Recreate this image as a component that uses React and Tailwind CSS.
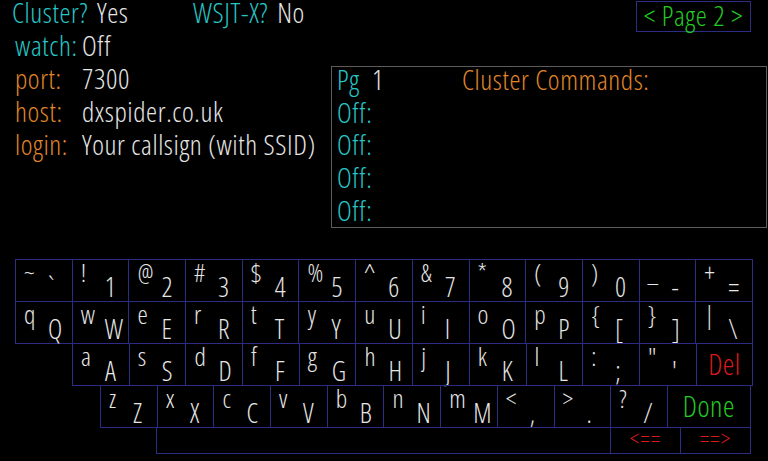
import React from 'react';

const row1 = [['~', '`'], ['!', '1'], ['@', '2'], ['#', '3'], ['$', '4'], ['%', '5'], ['^', '6'], ['&', '7'], ['*', '8'], ['(', '9'], [')', '0'], ['_', '-'], ['+', '=']];
const row2 = [['q', 'Q'], ['w', 'W'], ['e', 'E'], ['r', 'R'], ['t', 'T'], ['y', 'Y'], ['u', 'U'], ['i', 'I'], ['o', 'O'], ['p', 'P'], ['{', '['], ['}', ']'], ['|', '\\']];
const row3 = [['a', 'A'], ['s', 'S'], ['d', 'D'], ['f', 'F'], ['g', 'G'], ['h', 'H'], ['j', 'J'], ['k', 'K'], ['l', 'L'], [':', ';'], ['"', "'"]];
const row4 = [['z', 'Z'], ['x', 'X'], ['c', 'C'], ['v', 'V'], ['b', 'B'], ['n', 'N'], ['m', 'M'], ['<', ','], ['>', '.'], ['?', '/']];

const Key = ({ top, bottom }) => (
  <div className="-ml-px w-[57.7px] h-[43px] border border-[#2c2c84] flex items-start pl-[8px] text-[#e6e6e6]">
    <span className="w-[24px] text-[26px] leading-[26px] -mt-[1px]">{top}</span>
    <span className="text-[27px] leading-[27px] mt-[13px]">{bottom}</span>
  </div>
);

const WideKey = ({ label, className }) => (
  <div className={`-ml-px h-[43px] border border-[#2c2c84] flex items-center justify-center text-[29px] leading-[29px] tracking-[0.5px] ${className}`}>
    <span className="-mt-[3px]">{label}</span>
  </div>
);

const Line = ({ label, value, color }) => (
  <div className="flex h-[33px] leading-[33px]">
    <span className={`w-[67px] ${color}`}>{label}</span>
    <span className="text-[#e6e6e6] whitespace-nowrap">{value}</span>
  </div>
);

export default function App() {
  return (
    <div className="w-[768px] h-[461px] bg-black overflow-hidden font-['Open_Sans',sans-serif] font-light font-stretch-condensed text-[28px]">
      {/* settings */}
      <div className="-mt-[4px] tracking-[0.6px]">
        <div className="flex h-[33px] leading-[33px] pl-[12px]">
          <div className="w-[181px] flex">
            <span className="text-[#26c6c6]">Cluster?</span>
            <span className="ml-[9px] text-[#e6e6e6]">Yes</span>
          </div>
          <span className="text-[#26c6c6]">WSJT-X?</span>
          <span className="ml-[9px] text-[#e6e6e6]">No</span>
          <div className="ml-auto mr-[17px] mt-[5px] w-[115px] h-[31px] border border-[#2c2c84] flex items-center justify-center text-[#22cc22] leading-[31px]">
            <span className="-mt-[3px]">&lt; Page 2 &gt;</span>
          </div>
        </div>
        <div className="pl-[15px]">
          <Line label="watch:" value="Off" color="text-[#26c6c6]" />
        </div>
        <div className="flex">
          <div className="w-[331px] pl-[15px]">
            <Line label="port:" value="7300" color="text-[#e0862a]" />
            <Line label="host:" value="dxspider.co.uk" color="text-[#e0862a]" />
            <Line label="login:" value="Your callsign (with SSID)" color="text-[#e0862a]" />
          </div>
          <div className="mt-[4px] w-[436px] h-[162px] border border-[#5c5c5c] pl-[5px]">
            <div className="-mt-[4px] leading-[32.7px]">
              <div className="flex">
                <span className="w-[35px] text-[#26c6c6]">Pg</span>
                <span className="w-[90px] text-[#e6e6e6]">1</span>
                <span className="text-[#e0862a]">Cluster Commands:</span>
              </div>
              <div className="text-[#26c6c6]">Off:</div>
              <div className="text-[#26c6c6]">Off:</div>
              <div className="text-[#26c6c6]">Off:</div>
              <div className="text-[#26c6c6]">Off:</div>
            </div>
          </div>
        </div>
      </div>

      {/* keyboard */}
      <div className="mt-[31px]">
        <div className="flex pl-[16px]">
          {row1.map(([t, b]) => <Key key={t} top={t} bottom={b} />)}
        </div>
        <div className="flex pl-[16px] -mt-px">
          {row2.map(([t, b]) => <Key key={t} top={t} bottom={b} />)}
        </div>
        <div className="flex pl-[73px] -mt-px">
          {row3.map(([t, b]) => <Key key={t} top={t} bottom={b} />)}
          <WideKey label="Del" className="w-[57.7px] text-[#dd1a1a]" />
        </div>
        <div className="flex pl-[101px] -mt-px">
          {row4.map(([t, b]) => <Key key={t} top={t} bottom={b} />)}
          <WideKey label="Done" className="w-[84px] text-[#22cc22]" />
        </div>
        <div className="flex pl-[157px] -mt-px">
          <div className="-ml-px w-[455px] h-[27px] border border-[#2c2c84]" />
          <div className="-ml-px w-[71px] h-[27px] border border-[#2c2c84] flex items-center justify-center text-[23px] leading-[23px] tracking-[1px] text-[#dd1a1a]">
            <span className="-mt-[5px]">&lt;==</span>
          </div>
          <div className="-ml-px w-[71px] h-[27px] border border-[#2c2c84] flex items-center justify-center text-[23px] leading-[23px] tracking-[1px] text-[#dd1a1a]">
            <span className="-mt-[5px]">==&gt;</span>
          </div>
        </div>
      </div>
    </div>
  );
}
